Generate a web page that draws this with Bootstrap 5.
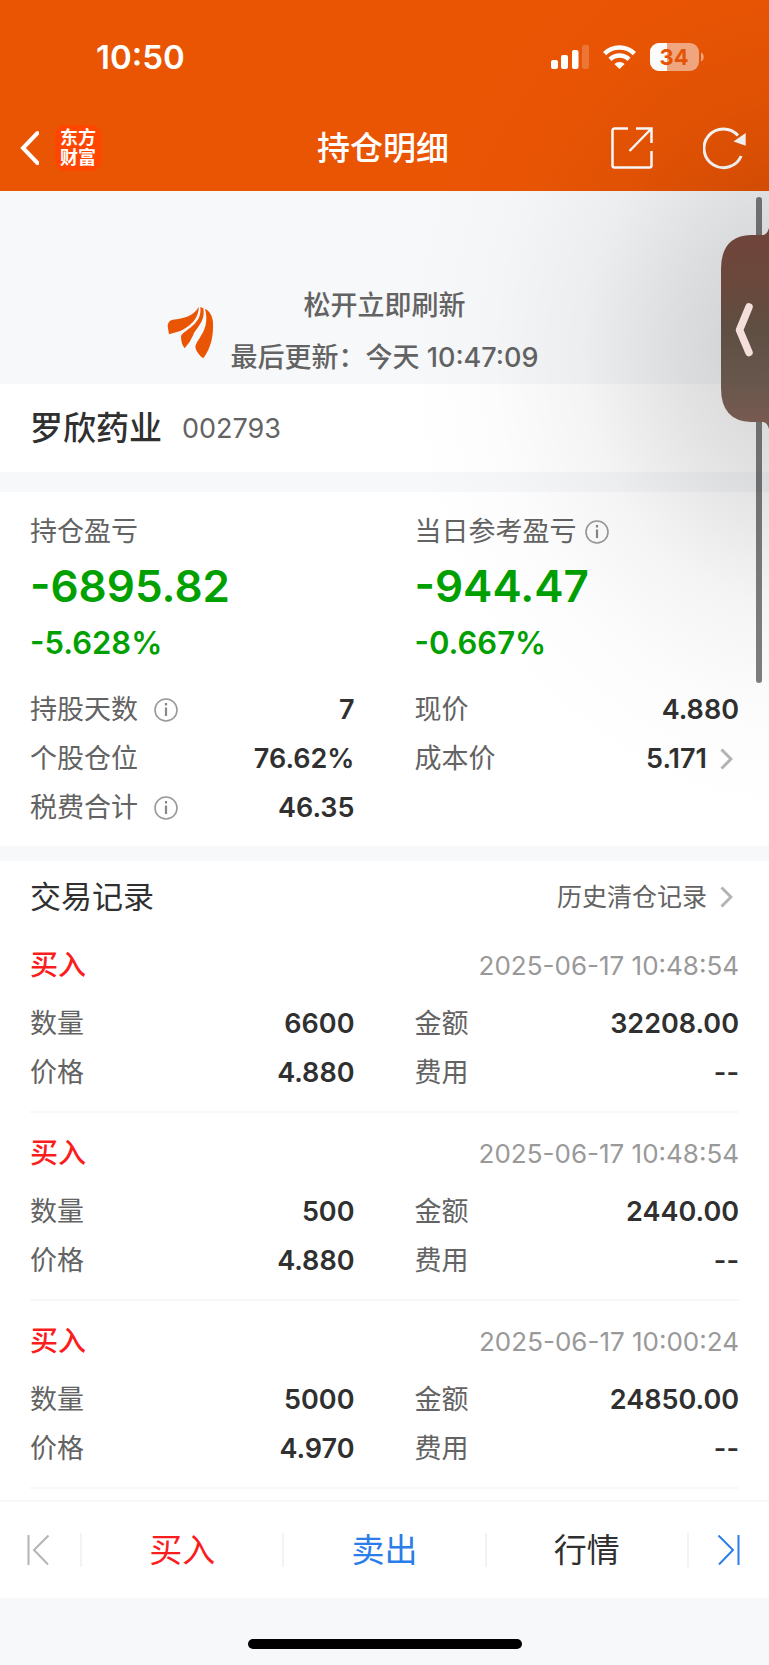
<!DOCTYPE html>
<html lang="zh-CN">
<head>
<meta charset="utf-8">
<meta name="viewport" content="width=device-width, initial-scale=1">
<title>持仓明细</title>
<link href="https://cdn.jsdelivr.net/npm/bootstrap@5.3.0/dist/css/bootstrap.min.css" rel="stylesheet">
<style>
  :root { --brand: #ea5504; --ground: #f7f8fa; --ink: #303030; --soft: #636363; --rule: #f8f8f8; }
  body { font-family: Inter, "Noto Sans CJK SC", sans-serif; font-size: 27px; line-height: 49px; color: var(--ink); background: #fff; overflow-x: hidden; }
  a { color: inherit; text-decoration: none; }
  svg { display: block; flex: none; }
  .btn-plain { border: 0; background: none; padding: 0; color: inherit; font: inherit; display: block; }
  .split { display: grid; grid-template-columns: 1fr auto 1fr; align-items: center; }
  .app-head { background: var(--brand); color: #fff; padding-bottom: 9px; }
  .status { height: 114px; padding: 0 64px 0 96px; }
  .clock { font-size: 33px; font-weight: 600; }
  .signals { gap: 14px; }
  .title-row { height: 68px; padding: 0 22px 0 19px; }
  .title-row h1 { font-size: 33px; font-weight: 500; line-height: 49px; }
  .actions { gap: 50px; }
  .brand-tile { width: 46px; height: 46px; border-radius: 10px; background: #ff4600; font-size: 18px; line-height: 20px; font-weight: 700; }
  .pull { background: var(--ground); padding-top: 89px; line-height: 52px; font-weight: 500; color: var(--soft); column-gap: 17px; }
  .stock { height: 88px; padding: 0 30px; gap: 20px; }
  .stock h2 { font-size: 33px; font-weight: 500; line-height: 49px; }
  .gap-lg { height: 20px; background: var(--ground); }
  .gap-sm { height: 15px; background: var(--ground); }
  .side { padding: 0 30px; }
  .tag { color: var(--soft); }
  .num { font-weight: 600; }
  .fall { color: #00a000; font-weight: 600; }
  .fall-lg { font-size: 44px; line-height: 60px; }
  .fall-md { font-size: 31px; line-height: 54px; }
  .totals { padding: 15px 0 14px; }
  .figures { padding-top: 15px; }
  .more { gap: 13px; padding-right: 6px; }
  .rec-head { padding: 8px 30px 0; line-height: 56px; }
  .rec-head h2 { font-size: 31px; font-weight: 400; line-height: 56px; }
  .rec-head a { font-size: 25px; color: var(--soft); }
  .record { padding-top: 16px; }
  .record h3 { font-size: 28px; font-weight: 500; line-height: 49px; color: #fb1d1d; }
  .record time { font-size: 26px; color: #999; }
  .record-top { padding: 0 30px 9px; }
  .record-end { margin: 14px 30px 0; border-bottom: 2px solid var(--rule); }
  .dock { border-top: 2px solid var(--rule); background: #fff; height: 98px; font-size: 33px; }
  .dock-end { width: 80px; }
  .dock-prev { padding-right: 4px; }
  .dock .sep { border-left: 2px solid #f3f3f3; height: 34px; }
  .buy { color: #fb1d1d; } .sell { color: #2b7de9; }
  .home { height: 67px; background: var(--ground); padding-bottom: 16px; }
  .home i { width: 274px; height: 10px; border-radius: 5px; background: #000; }
  .shade { position: absolute; top: 0; right: 0; width: 420px; height: 860px; pointer-events: none;
    background: radial-gradient(ellipse 400px 470px at 108% 350px, rgba(0,0,0,.18), rgba(0,0,0,.115) 30%, rgba(0,0,0,.045) 55%, rgba(0,0,0,.012) 78%, rgba(0,0,0,0)); }
  .scroll-thumb { position: absolute; top: 197px; right: 7px; width: 6px; height: 486px; border-radius: 3px; background: rgba(0,0,0,.5); }
  .drawer-tab { position: absolute; top: 228px; right: 0; }
</style>
</head>
<body>
<div class="position-relative min-vh-100 d-flex flex-column">
  <header class="app-head">
    <div class="status d-flex align-items-center justify-content-between">
      <span class="clock">10:50</span>
      <div class="signals d-flex align-items-center">
        <svg width="38" height="24" viewBox="0 0 38 24" fill="#fff"><rect y="15" width="7" height="9" rx="2"/><rect x="10" y="10" width="7" height="14" rx="2"/><rect x="21" y="5" width="6.500" height="19" rx="2"/><rect x="31" width="7" height="24" rx="2" opacity=".2"/></svg>
        <svg width="33" height="24" viewBox="0 0 33 24" fill="none" stroke="#fff" stroke-width="4.500"><path d="M1.600 8.600a21.300 21.300 0 0 1 29.800 0M7 14.400a13.600 13.600 0 0 1 19 0"/><path d="M11.300 19a7.500 7.500 0 0 1 10.400 0L16.500 24z" fill="#fff" stroke="none"/></svg>
        <svg width="55" height="28" viewBox="0 0 55 28"><clipPath id="cell"><rect width="49" height="28" rx="9"/></clipPath><g clip-path="url(#cell)"><rect width="49" height="28" fill="#fff" opacity=".5"/><rect width="17" height="28" fill="#fff"/></g><path d="M51 9.500c3.600 1.500 3.600 7.500 0 9z" fill="#fff" opacity=".5"/><text x="24" y="22" text-anchor="middle" font-size="22" font-weight="700" fill="#ea5504">34</text></svg>
      </div>
    </div>
    <nav class="title-row split">
      <div class="d-flex align-items-center gap-3">
        <button class="btn-plain" type="button" aria-label="返回"><svg width="20" height="36" viewBox="0 0 20 36" fill="none" stroke="#fff" stroke-width="4" stroke-linecap="round"><path d="M18.500 3 4 18l14.500 15"/></svg></button>
        <a href="#" class="brand-tile d-flex flex-column align-items-center justify-content-center"><span>东方</span><span>财富</span></a>
      </div>
      <h1 class="m-0">持仓明细</h1>
      <div class="actions d-flex align-items-center justify-content-end">
        <button class="btn-plain" type="button" aria-label="分享"><svg width="42" height="42" viewBox="0 0 42 42" fill="none" stroke="#fff" stroke-width="2.500"><path d="M17 1.500H3.500a2 2 0 0 0-2 2v35a2 2 0 0 0 2 2h35a2 2 0 0 0 2-2V24M25 1.500h15.500V16M40 2 18.500 24"/></svg></button>
        <button class="btn-plain" type="button" aria-label="刷新"><svg width="44" height="44" viewBox="0 0 44 44" fill="none" stroke="#fff" stroke-width="3"><path d="M35 9.500A19.400 19.400 0 1 0 38.200 30"/><path d="M42.700 7v12.700L30.500 15.500z" fill="#fff" stroke="none"/></svg></button>
      </div>
    </nav>
  </header>

  <main class="flex-grow-1">
    <section class="pull split text-center">
      <svg class="ms-auto" width="47" height="53" viewBox="105 104 141 159" fill="#ea5504"><path d="M200 106C188 132 155 142 122 145Q108 147 107 165L111 189L145 179C168 167 201 146 200 106z"/><path d="M205 107L214 111C221 150 193 170 184 190Q175 212 158 231C150 222 147 209 147 194C155 176 212 160 205 107z"/><path d="M219 112C232 118 242 134 243 153C245 193 237 230 214 261C203 253 192 240 190 226C194 202 236 176 219 112z"/></svg>
      <div><div>松开立即刷新</div><div>最后更新：今天 10:47:09</div></div>
    </section>
    <section class="stock d-flex align-items-center">
      <h2 class="m-0">罗欣药业</h2><span class="tag">002793</span>
    </section>
    <div class="gap-lg"></div>

    <section class="totals">
      <div class="row g-0">
        <div class="col-6 side">
          <div class="tag">持仓盈亏</div>
          <div class="fall fall-lg">-6895.82</div>
          <div class="fall fall-md">-5.628%</div>
        </div>
        <div class="col-6 side">
          <div class="tag d-flex align-items-center">当日参考盈亏<svg class="ms-2" width="24" height="24" viewBox="0 0 24 24"><circle cx="12" cy="12" r="11" fill="none" stroke="#999" stroke-width="1.600"/><path d="M12 9.500V18M12 5v2.500" stroke="#888" stroke-width="2.200"/></svg></div>
          <div class="fall fall-lg">-944.47</div>
          <div class="fall fall-md">-0.667%</div>
        </div>
      </div>
      <div class="row g-0 figures">
        <div class="col-6 side">
          <div class="d-flex justify-content-between"><span class="tag d-flex align-items-center">持股天数<svg class="ms-3" width="24" height="24" viewBox="0 0 24 24"><circle cx="12" cy="12" r="11" fill="none" stroke="#999" stroke-width="1.600"/><path d="M12 9.500V18M12 5v2.500" stroke="#888" stroke-width="2.200"/></svg></span><span class="num">7</span></div>
          <div class="d-flex justify-content-between"><span class="tag">个股仓位</span><span class="num">76.62%</span></div>
          <div class="d-flex justify-content-between"><span class="tag d-flex align-items-center">税费合计<svg class="ms-3" width="24" height="24" viewBox="0 0 24 24"><circle cx="12" cy="12" r="11" fill="none" stroke="#999" stroke-width="1.600"/><path d="M12 9.500V18M12 5v2.500" stroke="#888" stroke-width="2.200"/></svg></span><span class="num">46.35</span></div>
        </div>
        <div class="col-6 side">
          <div class="d-flex justify-content-between"><span class="tag">现价</span><span class="num">4.880</span></div>
          <a href="#" class="more d-flex align-items-center"><span class="tag me-auto">成本价</span><span class="num">5.171</span><svg width="13" height="22" viewBox="0 0 13 22" fill="none" stroke="#b4b4b4" stroke-width="3"><path d="M1.500 1.500 11 11l-9.500 9.500"/></svg></a>
        </div>
      </div>
    </section>
    <div class="gap-sm"></div>

    <section>
      <div class="rec-head d-flex justify-content-between">
        <h2 class="m-0">交易记录</h2>
        <a href="#" class="more d-flex align-items-center">历史清仓记录<svg width="13" height="22" viewBox="0 0 13 22" fill="none" stroke="#b4b4b4" stroke-width="3"><path d="M1.500 1.500 11 11l-9.500 9.500"/></svg></a>
      </div>
      <article class="record">
        <div class="record-top d-flex justify-content-between"><h3 class="m-0">买入</h3><time>2025-06-17 10:48:54</time></div>
        <div class="row g-0">
          <div class="col-6 side d-flex justify-content-between"><span class="tag">数量</span><span class="num">6600</span></div>
          <div class="col-6 side d-flex justify-content-between"><span class="tag">金额</span><span class="num">32208.00</span></div>
          <div class="col-6 side d-flex justify-content-between"><span class="tag">价格</span><span class="num">4.880</span></div>
          <div class="col-6 side d-flex justify-content-between"><span class="tag">费用</span><span class="num">--</span></div>
        </div>
        <div class="record-end"></div>
      </article>
      <article class="record">
        <div class="record-top d-flex justify-content-between"><h3 class="m-0">买入</h3><time>2025-06-17 10:48:54</time></div>
        <div class="row g-0">
          <div class="col-6 side d-flex justify-content-between"><span class="tag">数量</span><span class="num">500</span></div>
          <div class="col-6 side d-flex justify-content-between"><span class="tag">金额</span><span class="num">2440.00</span></div>
          <div class="col-6 side d-flex justify-content-between"><span class="tag">价格</span><span class="num">4.880</span></div>
          <div class="col-6 side d-flex justify-content-between"><span class="tag">费用</span><span class="num">--</span></div>
        </div>
        <div class="record-end"></div>
      </article>
      <article class="record">
        <div class="record-top d-flex justify-content-between"><h3 class="m-0">买入</h3><time>2025-06-17 10:00:24</time></div>
        <div class="row g-0">
          <div class="col-6 side d-flex justify-content-between"><span class="tag">数量</span><span class="num">5000</span></div>
          <div class="col-6 side d-flex justify-content-between"><span class="tag">金额</span><span class="num">24850.00</span></div>
          <div class="col-6 side d-flex justify-content-between"><span class="tag">价格</span><span class="num">4.970</span></div>
          <div class="col-6 side d-flex justify-content-between"><span class="tag">费用</span><span class="num">--</span></div>
        </div>
        <div class="record-end"></div>
      </article>
    </section>
  </main>

  <nav class="dock d-flex align-items-center">
    <button class="btn-plain dock-end dock-prev" type="button" aria-label="上一只"><svg class="mx-auto" width="24" height="30" viewBox="0 0 24 30" fill="none" stroke="#b4b4b4" stroke-width="2"><path d="M2.500 0v30M22.500.500 8 15l14 14.500"/></svg></button>
    <span class="sep"></span>
    <button class="btn-plain buy flex-fill" type="button">买入</button>
    <span class="sep"></span>
    <button class="btn-plain sell flex-fill" type="button">卖出</button>
    <span class="sep"></span>
    <button class="btn-plain flex-fill" type="button">行情</button>
    <span class="sep"></span>
    <button class="btn-plain dock-end" type="button" aria-label="下一只"><svg class="mx-auto" width="24" height="30" viewBox="0 0 24 30" fill="none" stroke="#2b7de9" stroke-width="2"><path d="M21.500 0v30M1.500.500 16 15 2 29.500"/></svg></button>
  </nav>
  <footer class="home d-flex align-items-end justify-content-center"><i></i></footer>

  <div class="shade"></div>
  <div class="scroll-thumb"></div>
  <button class="btn-plain drawer-tab" type="button" aria-label="展开侧栏">
    <svg width="48" height="201" viewBox="0 0 48 201"><defs><linearGradient id="tab" x1="0" y1="0" x2="0" y2="1"><stop offset=".05" stop-color="#6f443b"/><stop offset=".28" stop-color="#6a483c"/><stop offset=".5" stop-color="#5f4e42"/><stop offset=".75" stop-color="#66564c"/><stop offset=".97" stop-color="#785a50"/></linearGradient></defs><path d="M48 0Q46 7 42 7H30Q0 8 0 41V160Q0 193 30 194H42Q46 194 48 201z" fill="url(#tab)"/><path d="M28 79 18.500 102 28 124.500" fill="none" stroke="#f4dfda" stroke-width="7.500" stroke-linecap="round" stroke-linejoin="round"/></svg>
  </button>
</div>
<script src="https://cdn.jsdelivr.net/npm/bootstrap@5.3.0/dist/js/bootstrap.bundle.min.js"></script>
</body>
</html>
